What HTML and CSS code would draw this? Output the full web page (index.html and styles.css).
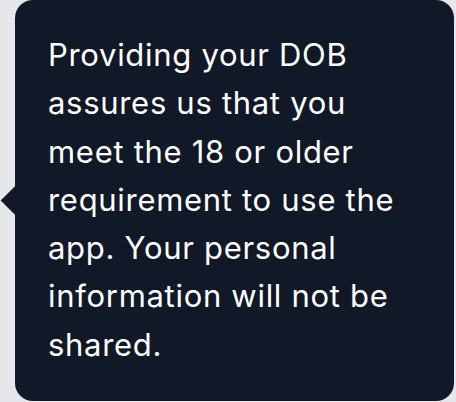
FILE: index.html
```html
<!DOCTYPE html>
<html lang="en">
<head>
<meta charset="utf-8">
<title>Tooltip</title>
<link rel="stylesheet" href="styles.css">
</head>
<body>
<div class="stage">
  <div class="tooltip">
    <p class="tooltip-text">Providing your DOB assures us that you meet the 18 or older requirement to use the app. Your personal information will not be shared.</p>
  </div>
</div>
</body>
</html>
```
FILE: styles.css
```css
html, body {
  margin: 0;
  padding: 0;
}
body {
  background: #e5e7eb;
  width: 456px;
  height: 402px;
  overflow: hidden;
}
.stage {
  padding-left: 15px;
}
.tooltip {
  position: relative;
  box-sizing: border-box;
  width: 439px;
  height: 401px;
  background: #111827;
  border-radius: 18px;
  padding: 31px 36px 0 33px;
}
.tooltip::before {
  content: "";
  position: absolute;
  left: -10px;
  top: 190px;
  width: 21px;
  height: 21px;
  background: #111827;
  transform: rotate(45deg);
}
.tooltip-text {
  margin: 0;
  font-family: Inter, "Noto Sans", sans-serif;
  font-size: 31px;
  line-height: 48.3px;
  letter-spacing: 0.7px;
  color: #ffffff;
}
```
